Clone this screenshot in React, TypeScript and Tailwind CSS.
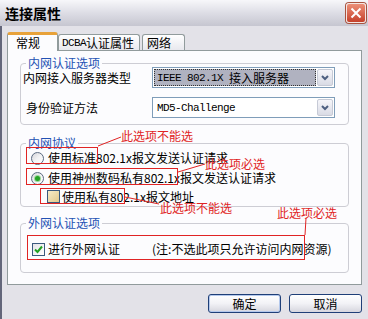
import type { ReactNode } from "react";

const cjk = "font-['Noto_Sans_CJK_SC',sans-serif]";

function Radio({ checked }: { checked?: boolean }) {
  return (
    <span className="w-[13px] h-[13px] shrink-0 rounded-full border border-[#5a6a80] bg-linear-to-br from-[#d4d4d8] via-[#f2f2f4] to-white flex items-center justify-center">
      {checked && <span className="w-[5px] h-[5px] rounded-full bg-[#26a326] shadow-[0_0_0_1px_#9bd89b]" />}
    </span>
  );
}

function Check({ checked, warm }: { checked?: boolean; warm?: boolean }) {
  return (
    <span
      className={
        "w-[13px] h-[13px] shrink-0 border border-[#3b5a7e] flex items-center justify-center " +
        (warm ? "bg-linear-to-br from-[#f7ecc8] to-[#e2c98c]" : "bg-linear-to-br from-[#e4e4e8] to-white")
      }
    >
      {checked && (
        <svg width="9" height="9" viewBox="0 0 9 9">
          <path d="M1 4.5 L3.5 7 L8 1.5" fill="none" stroke="#21a121" strokeWidth="2" />
        </svg>
      )}
    </span>
  );
}

function Select({ children, focused }: { children: ReactNode; focused?: boolean }) {
  return (
    <div className="w-[183px] h-[21px] border border-[#7f9db9] bg-white flex items-stretch p-px">
      <div
        className={
          "flex-1 flex items-center pl-[3px] " +
          (focused ? "bg-[#b0b2c0] outline-1 outline-dotted outline-[#333] -outline-offset-1" : "")
        }
      >
        {children}
      </div>
      <div className="w-[16px] ml-px rounded-[2px] border border-[#c6cad6] bg-linear-to-b from-[#f6f6fa] to-[#d9dbe5] flex items-center justify-center">
        <svg width="8" height="6" viewBox="0 0 8 6">
          <path d="M1 1 L4 4 L7 1" fill="none" stroke="#4d5f80" strokeWidth="2" />
        </svg>
      </div>
    </div>
  );
}

function Group({ title, className, children }: { title: string; className?: string; children: ReactNode }) {
  return (
    <div className={"relative mx-[12px] rounded-[4px] border border-[#cdcdd4] " + (className ?? "")}>
      <span className="absolute -top-[8px] left-[5px] bg-[#fcfcfe] px-[2px] leading-[14px] text-[#2352b4]">{title}</span>
      {children}
    </div>
  );
}

const mono = "font-['Liberation_Mono',monospace] text-[11px] tracking-[-0.6px]";

export default function App() {
  return (
    <div className={`relative w-[368px] h-[319px] overflow-hidden bg-[#e3e2e8] ${cjk} text-[12px] leading-[14px] text-black`}>
      {/* Title bar */}
      <div className="h-[26px] flex items-center pl-[5px] bg-linear-to-b from-[#f7f7fa] via-[#dddde5] to-[#c6c6d0]">
        <span className="text-[14px] font-bold leading-[16px]">连接属性</span>
        <div className="ml-auto mr-[2px] w-[20px] h-[20px] rounded-[3px] border border-[#f4e6e2] bg-linear-to-b from-[#ec8f78] to-[#c5402a] shadow-[0_0_0_1px_#a8533f] flex items-center justify-center">
          <svg width="12" height="12" viewBox="0 0 12 12">
            <path d="M1.5 1.5 L10.5 10.5 M10.5 1.5 L1.5 10.5" stroke="#fff" strokeWidth="2" />
          </svg>
        </div>
      </div>

      <div className="h-[293px] border-l-2 border-[#63667a] flex flex-col">
        {/* Tabs */}
        <div className="mt-[6px] pl-[5px] h-[19px] flex items-end">
          <div className="relative z-10 w-[51px] h-[19px] bg-[#fcfcfe] border-x border-[#919b9c] border-t-[3px] border-t-[#e8a23a] rounded-t-[3px] pl-[8px] flex items-center">
            常规
          </div>
          <div className="w-[82px] h-[16px] mb-px bg-linear-to-b from-white to-[#e8e8ee] border-x border-t border-[#919b9c] rounded-t-[3px] pl-[3px] flex items-center">
            <span className={mono}>DCBA</span>认证属性
          </div>
          <div className="ml-[2px] w-[43px] h-[16px] mb-px bg-linear-to-b from-white to-[#e8e8ee] border-x border-t border-[#919b9c] rounded-t-[3px] pl-[4px] flex items-center">
            网络
          </div>
        </div>

        {/* Panel */}
        <div className="-mt-px ml-[5px] w-[355px] h-[235px] border border-[#919b9c] bg-[#fcfcfe] flex flex-col">
          <Group title="内网认证选项" className="mt-[12px] pt-[3px] pb-[6px]">
            <div className="flex items-center">
              <span className="w-[131px] pl-[2px]">内网接入服务器类型</span>
              <Select focused>
                <span className={mono}>IEEE 802.1X&nbsp;</span>接入服务器
              </Select>
            </div>
            <div className="flex items-center mt-[9px]">
              <span className="w-[131px] pl-[5px]">身份验证方法</span>
              <Select>
                <span className={mono}>MD5-Challenge</span>
              </Select>
            </div>
          </Group>

          <Group title="内网协议" className="mt-[18px] pt-[4px] pb-px">
            <div className="h-[20px] flex items-center gap-[4px] pl-[10px]">
              <Radio />
              <span>使用标准802.1x报文发送认证请求</span>
            </div>
            <div className="h-[20px] flex items-center gap-[4px] pl-[10px]">
              <Radio checked />
              <span>使用神州数码私有802.1x报文发送认证请求</span>
            </div>
            <div className="h-[17px] flex items-center gap-[2px] pl-[26px]">
              <Check warm />
              <span>使用私有802.1x报文地址</span>
            </div>
          </Group>

          <Group title="外网认证选项" className="mt-[16px] pt-[15px] pb-[13px]">
            <div className="h-[20px] flex items-center pl-[11px]">
              <Check checked />
              <span className="ml-[3px]">进行外网认证</span>
              <span className="ml-[32px]">(注:不选此项只允许访问内网资源)</span>
            </div>
          </Group>
        </div>

        {/* Buttons */}
        <div className="mt-[9px] ml-[5px] w-[355px] flex justify-end gap-[8px]">
          <button className="w-[73px] h-[19px] rounded-[3px] border border-[#1f3f78] bg-linear-to-b from-white via-[#f2f2f6] to-[#d6d6de] shadow-[inset_0_0_0_1px_#b4c8ec] flex items-center justify-center">
            确定
          </button>
          <button className="w-[73px] h-[19px] rounded-[3px] border border-[#1f3f78] bg-linear-to-b from-white via-[#f2f2f6] to-[#d6d6de] flex items-center justify-center">
            取消
          </button>
        </div>
      </div>

      {/* Red annotations */}
      <svg className="absolute inset-0 pointer-events-none" width="368" height="319">
        <g stroke="#e02424" strokeWidth="1" fill="none">
          <path d="M98 146 L121 137" />
          <path d="M178 172 L205 164" />
          <path d="M125 197 L159 204" />
          <path d="M306 218 L305 235" />
        </g>
      </svg>
      <div className="absolute left-[26px] top-[147px] w-[72px] h-[17px] border border-[#e02424]" />
      <div className="absolute left-[26px] top-[168px] w-[152px] h-[17px] border border-[#e02424]" />
      <div className="absolute left-[40px] top-[188px] w-[85px] h-[16px] border border-[#e02424]" />
      <div className="absolute left-[27px] top-[235px] w-[278px] h-[25px] border border-[#e02424]" />
      <span className="absolute left-[121px] top-[129px] text-[#e02424]">此选项不能选</span>
      <span className="absolute left-[205px] top-[157px] text-[#e02424]">此选项必选</span>
      <span className="absolute left-[160px] top-[201px] text-[#e02424]">此选项不能选</span>
      <span className="absolute left-[277px] top-[206px] text-[#e02424]">此选项必选</span>
    </div>
  );
}
